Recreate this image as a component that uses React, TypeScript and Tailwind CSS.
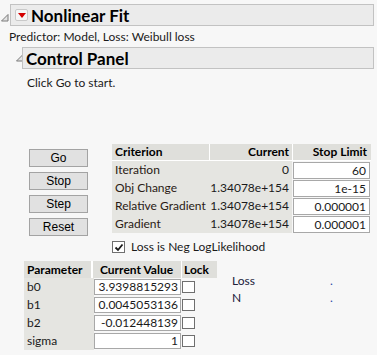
import React from 'react';

const CRITERIA = [
  { name: 'Iteration', current: '0', limit: '60' },
  { name: 'Obj Change', current: '1.34078e+154', limit: '1e-15' },
  { name: 'Relative Gradient', current: '1.34078e+154', limit: '0.000001' },
  { name: 'Gradient', current: '1.34078e+154', limit: '0.000001' },
];

const PARAMS = [
  { name: 'b0', value: '3.9398815293' },
  { name: 'b1', value: '0.0045053136' },
  { name: 'b2', value: '-0.012448139' },
  { name: 'sigma', value: '1' },
];

const BUTTONS = ['Go', 'Stop', 'Step', 'Reset'];

function Disclosure() {
  return (
    <svg width="8" height="8" viewBox="0 0 8 8">
      <polygon points="7,0.5 7,7 0.5,7" fill="#e4e4e4" stroke="#7a7a7a" strokeWidth="1" />
    </svg>
  );
}

function Checkbox({ checked }: { checked?: boolean }) {
  return (
    <div className="w-[13px] h-[12px] border border-[#6f6f6f] bg-white flex items-center justify-center">
      {checked && (
        <svg width="10" height="9" viewBox="0 0 10 9">
          <path d="M1.5 4.5 L4 7 L8.5 1.5" fill="none" stroke="#1a1a1a" strokeWidth="1.8" />
        </svg>
      )}
    </div>
  );
}

export default function App() {
  return (
    <div
      className="w-[377px] h-[355px] bg-[#f7f7f7] overflow-hidden text-[#1a1a1a] whitespace-nowrap"
      style={{ fontFamily: 'Lato, "Noto Sans", sans-serif' }}
    >
      {/* Nonlinear Fit outline header */}
      <div className="flex items-start pt-[4px] pr-[3px]">
        <div className="w-[10px] h-[22px] pl-[1px] pt-[10px]">
          <Disclosure />
        </div>
        <div className="flex-1 h-[22px] border border-[#c2c2c2] bg-[#ebebeb] flex items-center pl-[4px] gap-[3px]">
          <div className="w-[13px] h-[12px] rounded-[2px] border border-[#c9c9c9] bg-[#f6f6f6] flex items-center justify-center">
            <svg width="8" height="5" viewBox="0 0 8 5">
              <polygon points="0,0 8,0 4,5" fill="#d40000" />
            </svg>
          </div>
          <span className="text-[17px] font-bold leading-none text-black">Nonlinear Fit</span>
        </div>
      </div>

      <div className="pl-[9px] mt-[3px] text-[12px] leading-[15px]">Predictor: Model, Loss: Weibull loss</div>

      {/* Control Panel outline */}
      <div className="flex items-start pl-[16px] pr-[3px] mt-[3px]">
        <div className="w-[6px] h-[22px] pt-[7px]">
          <Disclosure />
        </div>
        <div className="flex-1 h-[22px] border border-[#c2c2c2] bg-[#ebebeb] flex items-center pl-[3px]">
          <span className="text-[17px] font-bold leading-none text-black">Control Panel</span>
        </div>
      </div>

      <div className="pl-[27px] mt-[6px] text-[12px] leading-[15px]">Click Go to start.</div>

      {/* Buttons + criterion table */}
      <div className="flex items-start pl-[29px] mt-[54px]">
        <div className="flex flex-col gap-[5px] pt-[5px] w-[59px]">
          {BUTTONS.map((b) => (
            <div
              key={b}
              className="h-[18px] border border-[#a3a3a3] bg-[#e1e1e1] flex items-center justify-center text-[12px] text-black"
              style={{ fontFamily: '"Liberation Sans", Arial, sans-serif' }}
            >
              {b}
            </div>
          ))}
        </div>

        <div className="ml-[24px] flex flex-col">
          <div className="flex h-[16px] text-[12px] font-bold leading-[16px] text-black">
            <div className="w-[97px] bg-[#dfdfdb] pl-[3px]">Criterion</div>
            <div className="w-[1px] bg-white" />
            <div className="w-[82px] bg-[#dfdfdb] text-right pr-[3px]">Current</div>
            <div className="w-[1px] bg-white" />
            <div className="w-[78px] bg-[#dfdfdb] text-right pr-[4px]">Stop Limit</div>
          </div>
          <div className="h-[1px] bg-white" />
          {CRITERIA.map((c) => (
            <div key={c.name} className="flex h-[18px] text-[12px] leading-[18px]">
              <div className="w-[97px] bg-[#e5e5e1] pl-[3px] text-[#2a1a14]">{c.name}</div>
              <div className="w-[83px] bg-[#e5e5e1] text-right pr-[3px]">{c.current}</div>
              <div className="w-[78px] flex items-center pl-[1px]">
                <div className="w-[77px] h-[17px] border border-[#a8a8a8] bg-white text-right pr-[3px] leading-[15px]">
                  {c.limit}
                </div>
              </div>
            </div>
          ))}

          <div className="flex items-center gap-[6px] mt-[7px] text-[12px] leading-[14px]">
            <Checkbox checked />
            <span>Loss is Neg LogLikelihood</span>
          </div>
        </div>
      </div>

      {/* Parameter table + loss summary */}
      <div className="flex items-start pl-[24px] mt-[7px]">
        <div className="flex flex-col">
          <div className="flex h-[17px] text-[12px] font-bold leading-[17px] text-black">
            <div className="w-[67px] bg-[#dfdfdb] pl-[3px]">Parameter</div>
            <div className="w-[2px] bg-white" />
            <div className="w-[88px] bg-[#dfdfdb] pl-[7px]">Current Value</div>
            <div className="w-[1px] bg-white" />
            <div className="w-[35px] bg-[#dfdfdb] pl-[2px]">Lock</div>
          </div>
          {PARAMS.map((p) => (
            <div key={p.name} className="flex h-[18px] text-[12px]">
              <div className="w-[70px] bg-[#e5e5e1] pl-[3px] leading-[18px]">{p.name}</div>
              <div className="w-[87px] flex items-center">
                <div className="w-[87px] h-[16px] border border-[#a8a8a8] bg-white text-right pr-[2px] leading-[14px]">
                  {p.value}
                </div>
              </div>
              <div className="w-[36px] pl-[1px] flex items-center">
                <Checkbox />
              </div>
            </div>
          ))}
        </div>

        <div className="ml-[15px] mt-[11px] flex flex-col text-[12px] leading-[17px] text-[#20203a]">
          <div className="flex">
            <span className="w-[98px]">Loss</span>
            <span className="text-[#2a48a8]">.</span>
          </div>
          <div className="flex">
            <span className="w-[98px]">N</span>
            <span className="text-[#2a48a8]">.</span>
          </div>
        </div>
      </div>
    </div>
  );
}
